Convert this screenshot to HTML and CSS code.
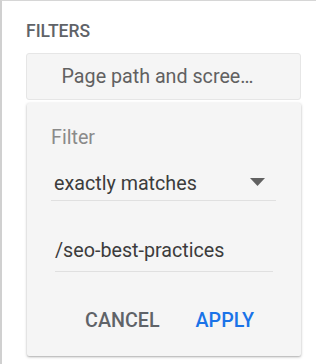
FILE: index.html
```html
<!DOCTYPE html>
<html>
<head>
<meta charset="utf-8">
<link rel="stylesheet" href="styles.css">
</head>
<body>
<div class="panel">
  <div class="title">FILTERS</div>
  <div class="chip">Page path and scree…</div>
  <div class="popup">
    <div class="label">Filter</div>
    <div class="select">
      <span class="select-text">exactly matches</span>
      <svg class="arrow" width="15" height="8" viewBox="0 0 15 8"><path d="M0 0H15L7.5 8Z" fill="#616161"/></svg>
    </div>
    <div class="input">/seo-best-practices</div>
    <div class="actions">
      <span class="btn cancel">CANCEL</span>
      <span class="btn apply">APPLY</span>
    </div>
  </div>
</div>
</body>
</html>
```
FILE: styles.css
```css
html, body {
  margin: 0;
  padding: 0;
  background: #fff;
}
body {
  width: 316px;
  height: 364px;
  box-sizing: border-box;
  border-top: 1px solid #d6d6d6;
  border-left: 2px solid #d0d0d0;
  font-family: Roboto, "Liberation Sans", sans-serif;
  overflow: hidden;
}
.panel {
  padding: 20px 15px 0 24px;
  display: flex;
  flex-direction: column;
}
.title {
  font-size: 17.5px;
  line-height: 21px;
  font-weight: 500;
  color: #5f6368;
}
.chip {
  margin-top: 11px;
  height: 47px;
  box-sizing: border-box;
  background: #f5f5f5;
  border: 1px solid #e6e6e6;
  border-radius: 3px;
  display: flex;
  align-items: center;
  justify-content: center;
  font-size: 19.7px;
  color: #616161;
  padding-right: 12px;
}
.popup {
  margin-top: 3px;
  margin-left: 1px;
  height: 253px;
  box-sizing: border-box;
  background: #f5f5f5;
  border-radius: 2px;
  box-shadow: 0 1px 3px rgba(0,0,0,0.28), 0 1px 1px rgba(0,0,0,0.08);
  padding: 23px 25px 0 24px;
  display: flex;
  flex-direction: column;
}
.label {
  font-size: 19.7px;
  line-height: 23px;
  color: #8a8a8a;
}
.select {
  margin-top: 23px;
  height: 29px;
  box-sizing: border-box;
  border-bottom: 1px solid #e0e0e0;
  display: flex;
  align-items: flex-start;
  justify-content: space-between;
  padding: 0 11px 0 3px;
}
.select-text {
  font-size: 19.7px;
  line-height: 23px;
  color: #3c3c3c;
}
.arrow {
  margin-top: 6px;
}
.input {
  margin: 38px 3px 0 4px;
  height: 33px;
  box-sizing: border-box;
  border-bottom: 1px solid #e0e0e0;
  font-size: 19.7px;
  line-height: 23px;
  color: #3c3c3c;
}
.actions {
  margin-top: 37px;
  display: flex;
  justify-content: center;
  gap: 36px;
  padding-left: 12px;
}
.btn {
  font-size: 19.7px;
  line-height: 23px;
  font-weight: 500;
}
.cancel {
  color: #5f6368;
}
.apply {
  color: #1a73e8;
}
```
